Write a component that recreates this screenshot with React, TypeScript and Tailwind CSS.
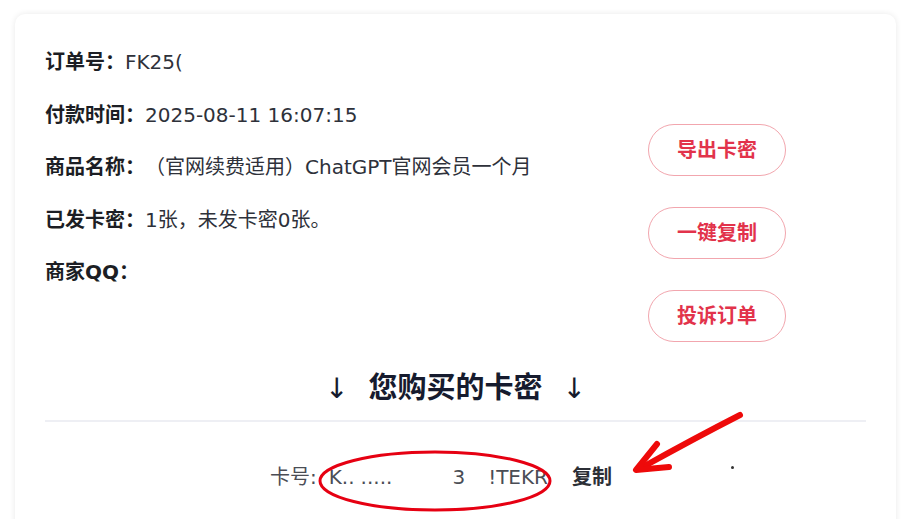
const font = { fontFamily: '"DejaVu Sans", "Noto Sans CJK SC", sans-serif' }

const rows: { label: string; value: string }[] = [
  { label: '订单号：', value: 'FK25(' },
  { label: '付款时间：', value: '2025-08-11 16:07:15' },
  { label: '商品名称：', value: '（官网续费适用）ChatGPT官网会员一个月' },
  { label: '已发卡密：', value: '1张，未发卡密0张。' },
  { label: '商家QQ：', value: '' },
]

const actions = ['导出卡密', '一键复制', '投诉订单']

export default function App() {
  return (
    <div className="h-[519px] w-[910px] overflow-hidden bg-white pl-[15px] pt-[14px]" style={font}>
      <div className="relative h-[560px] w-[881px] rounded-[10px] bg-white px-[30px] pt-[22px] shadow-[0_0_6px_rgba(0,0,0,0.09)]">
        {/* order info + actions */}
        <div className="flex">
          <div className="flex-1">
            {rows.map((r) => (
              <div key={r.label} className="flex h-[52.5px] items-center text-[20px] text-[#2e313a]">
                <span className="font-bold text-[#1c1e24]">{r.label}</span>
                <span className="whitespace-pre">{r.value}</span>
              </div>
            ))}
          </div>
          <div className="mr-[80px] mt-[88px] flex w-[138px] flex-col gap-[31px]">
            {actions.map((a) => (
              <button
                key={a}
                type="button"
                className="flex h-[52px] items-center justify-center rounded-full border-[1.5px] border-[#f2a6ae] text-[20px] font-bold text-[#e2334b]"
              >
                {a}
              </button>
            ))}
          </div>
        </div>

        {/* section title */}
        <div className="mt-[27px] flex h-[40px] items-center justify-center text-[#161b2e]">
          <span className="text-[28px]">↓</span>
          <span className="mx-[20px] text-[29px] font-bold">您购买的卡密</span>
          <span className="text-[28px]">↓</span>
        </div>
        <div className="mt-[11px] h-[2px] w-full bg-[#eeeff4]" />

        {/* card row */}
        <div className="mt-[35px] flex h-[40px] items-center pl-[225px] text-[20px]">
          <span className="text-[#4a4d55]">卡号:</span>
          <span className="relative ml-[12px] flex whitespace-pre text-[#4a4d55]">
            <span>K..</span>
            <span className="ml-[6px]">.....</span>
            <span className="ml-[60px]">3</span>
            <span className="ml-[23px]">!TEKR</span>
            <svg className="absolute left-[-12px] top-[-13px]" width="236" height="64" viewBox="0 0 236 64" fill="none">
              <ellipse cx="118" cy="32" rx="115" ry="29" stroke="#e60012" strokeWidth="3" />
            </svg>
          </span>
          <span className="ml-[24px] font-bold text-[#2c2f36]">复制</span>
        </div>

        {/* hand-drawn arrow annotation */}
        <svg className="absolute left-[610px] top-[392px]" width="140" height="80" viewBox="0 0 140 80" fill="none">
          <path d="M115 9 Q70 32 16 62" stroke="#ee0a0a" strokeWidth="6" strokeLinecap="round" />
          <path d="M32 38 L11 64 L44 61" stroke="#ee0a0a" strokeWidth="6" strokeLinecap="round" strokeLinejoin="round" />
        </svg>
        <div className="absolute left-[716px] top-[452px] h-[3px] w-[3px] rounded-full bg-[#333]" />
      </div>
    </div>
  )
}
